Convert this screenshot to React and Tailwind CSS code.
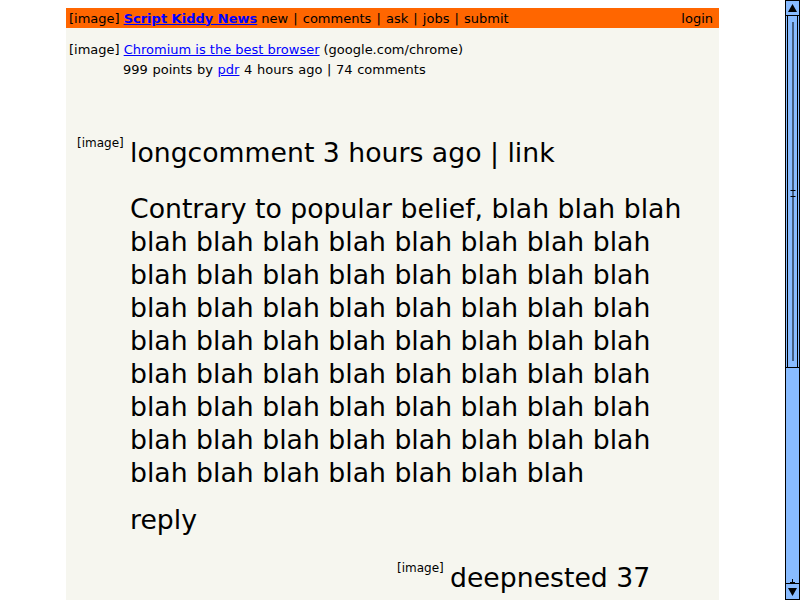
import React from 'react';

const Scrollbar = () => (
  <div className="flex h-[600px] w-[15px] flex-col border border-black bg-[#88bbff]">
    {/* top arrow */}
    <div className="flex h-[15px] items-center justify-center border-b border-black">
      <svg width="9" height="8" viewBox="0 0 9 8">
        <path d="M4.5 0 L9 8 L0 8 Z" fill="#000" />
      </svg>
    </div>
    {/* thumb */}
    <div className="h-[352px] border-b border-black">
      <div className="relative mx-px h-full border-x border-black">
        <div className="absolute left-1/2 top-[6px] bottom-[6px] w-px -translate-x-1/2 bg-black" />
        <div className="absolute left-1/2 top-[174px] h-px w-[5px] -translate-x-1/2 bg-black" />
        <div className="absolute left-1/2 top-[180px] h-px w-[5px] -translate-x-1/2 bg-black" />
      </div>
    </div>
    <div className="flex-1" />
    {/* bottom arrow */}
    <div className="flex h-[4px] justify-center">
      <div className="flex flex-col items-center">
        <div className="h-[3px] w-px bg-black" />
        <div className="h-px w-[5px] bg-black" />
      </div>
    </div>
    <div className="flex h-[16px] items-center justify-center border-t border-black">
      <svg width="9" height="8" viewBox="0 0 9 8">
        <path d="M0 0 L9 0 L4.5 8 Z" fill="#000" />
      </svg>
    </div>
  </div>
);

const Header = () => (
  <div className="flex h-5 items-center justify-between bg-[#ff6600] pl-[3px] pr-[6px] text-[13px] leading-none">
    <div className="flex items-center gap-[4px] whitespace-pre">
      <span>[image]</span>
      <a className="font-bold text-[#0000ff] underline">Script Kiddy News</a>
      <span className="[word-spacing:1px]">new | comments | ask | jobs | submit</span>
    </div>
    <span>login</span>
  </div>
);

const Story = () => (
  <div className="pl-[3px] pt-[14px] text-[13px] leading-[15px]">
    <div className="flex gap-[4px] whitespace-pre">
      <span>[image]</span>
      <a className="text-[#0000ff] underline">Chromium is the best browser</a>
      <span>(google.com/chrome)</span>
    </div>
    <div className="mt-[5px] whitespace-pre pl-[54px] [word-spacing:0.5px]">
      999 points by <a className="text-[#0000ff] underline">pdr</a> 4 hours ago | 74 comments
    </div>
  </div>
);

const Comment = ({ indent, title, body }) => (
  <div className="flex" style={{ paddingLeft: indent }}>
    <span className="w-[53px] shrink-0 pt-[1px] text-[12px] leading-none">[image]</span>
    <div className="flex-1 pr-[24px] text-[26.7px] leading-[33px]">
      <div>{title}</div>
      {body && <p className="mt-[23px]">{body}</p>}
      {body && <p className="mt-[14px]">reply</p>}
    </div>
  </div>
);

const blahs = Array(66).fill('blah').join(' ');

export default function App() {
  return (
    <div className="flex h-[600px] w-[800px] overflow-hidden bg-white font-['DejaVu_Sans',sans-serif] text-black">
      <div className="flex-1 overflow-hidden pt-2">
        <div className="ml-[66px] min-h-[700px] w-[653px] bg-[#f6f6ef]">
          <Header />
          <Story />
          <div className="pt-[59px]">
            <Comment
              indent={11}
              title="longcomment 3 hours ago | link"
              body={`Contrary to popular belief, ${blahs}`}
            />
            <div className="mt-[25px]">
              <Comment indent={331} title="deepnested 37 minutes ago | link" />
            </div>
          </div>
        </div>
      </div>
      <Scrollbar />
    </div>
  );
}
